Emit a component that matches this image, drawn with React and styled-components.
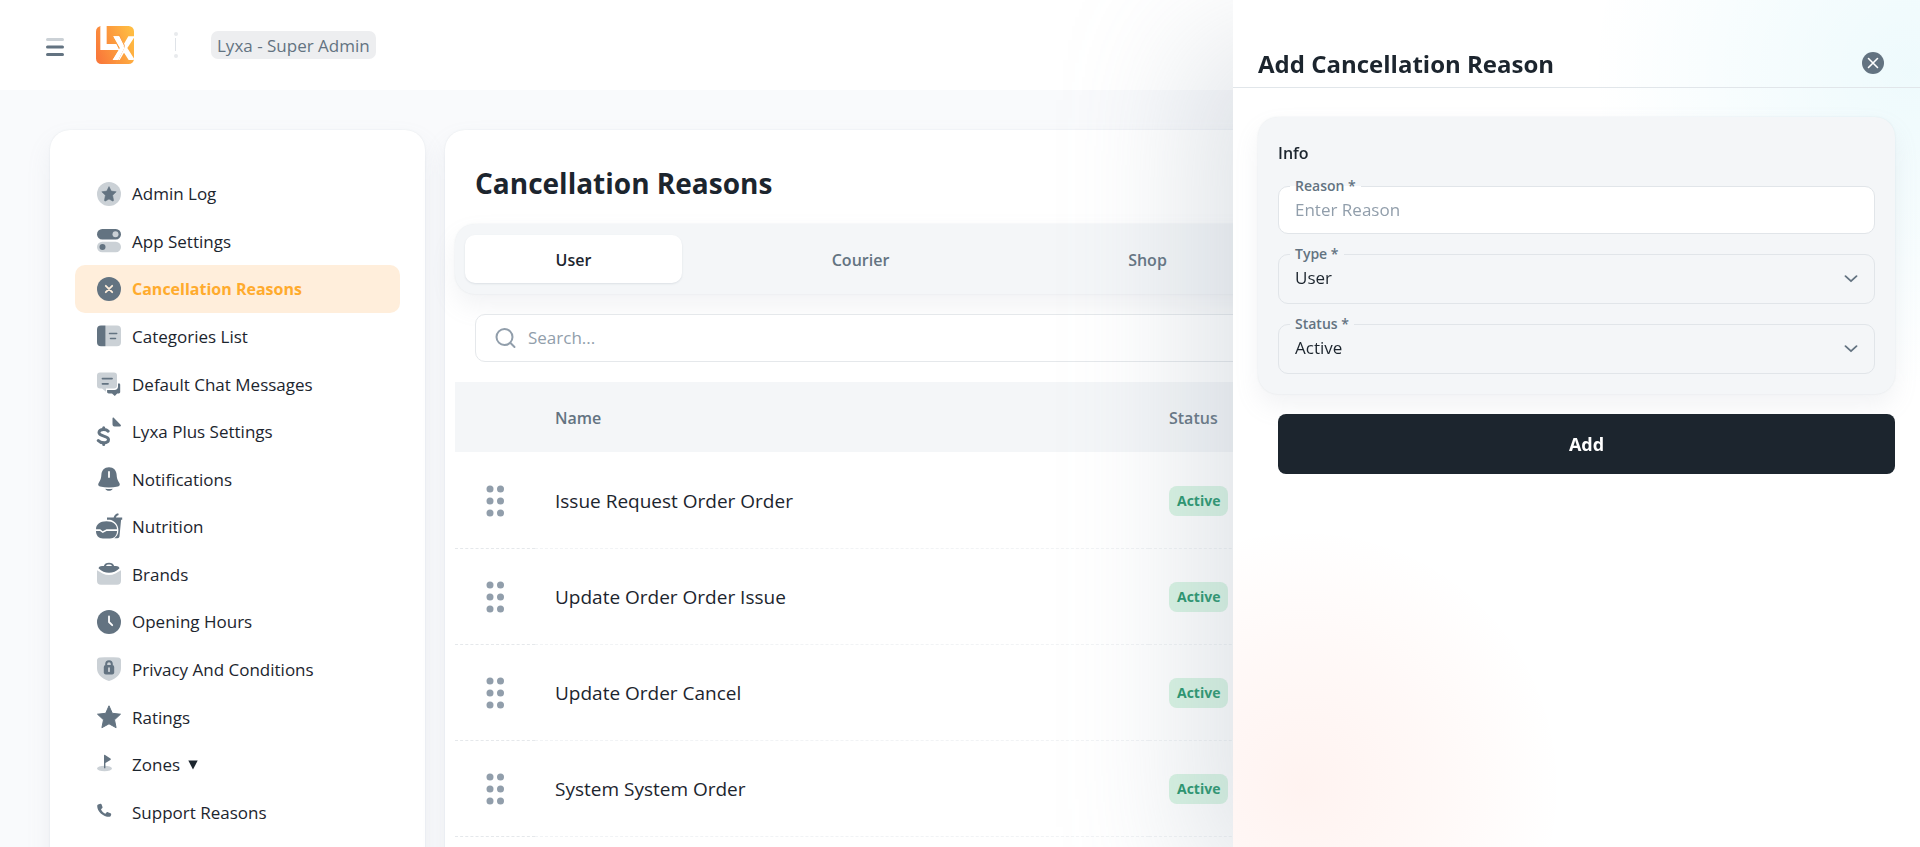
import React from "react";
import styled, { createGlobalStyle, css } from "styled-components";

const GlobalStyle = createGlobalStyle`
  *, *::before, *::after { box-sizing: border-box; }
  body {
    margin: 0;
    overflow: hidden;
    background: #f9fafc;
    color: #1c252e;
    font-family: "Open Sans", "Noto Sans", sans-serif;
    font-size: 17px;
    line-height: 24px;
  }
  button, input, select { font: inherit; color: inherit; }
`;

const softShadow = css`
  box-shadow: 0 0 2px rgba(145, 158, 171, 0.2), 0 12px 24px rgba(145, 158, 171, 0.12);
`;

/* ---------- header ---------- */

const Header = styled.header`
  display: flex;
  align-items: center;
  height: 90px;
  padding: 0 46px;
  background: #fff;
`;

const IconButton = styled.button`
  display: flex;
  padding: 0;
  border: 0;
  background: none;
  cursor: pointer;
`;

const MenuButton = styled(IconButton)`
  padding-top: 4px;
`;

const LogoLink = styled.a`
  display: flex;
  margin-left: 32px;
`;

const Divider = styled.svg`
  margin: 0 33px 0 40px;
`;

const RolePill = styled.span`
  padding: 3px 6px 1px;
  border-radius: 7px;
  background: #edeef0;
  color: #637381;
`;

/* ---------- page ---------- */

const Page = styled.div`
  display: grid;
  grid-template-columns: 375px minmax(0, 1fr);
  gap: 20px;
  padding: 40px 50px;
`;

const Sidebar = styled.nav`
  padding: 40px 25px;
  border-radius: 20px;
  background: #fff;
  ${softShadow}
`;

const NavList = styled.ul`
  display: grid;
  grid-auto-rows: 1fr;
  min-height: 666px;
  margin: 0;
  padding: 0;
  list-style: none;
`;

const NavItem = styled.li`
  display: flex;
`;

const NavLink = styled.a`
  display: flex;
  flex: 1;
  align-items: center;
  gap: 11px;
  padding: 0 22px;
  border-radius: 10px;
  background: ${(p) => (p.$active ? "#ffeedb" : "transparent")};
  color: ${(p) => (p.$active ? "#ffab2d" : "#1c252e")};
  font-size: ${(p) => (p.$active ? "16px" : "17px")};
  font-weight: ${(p) => (p.$active ? 700 : 500)};
  text-decoration: none;
`;

const NavText = styled.span`
  display: flex;
  align-items: center;
  gap: 8px;
  padding-top: 1px;
`;

const Content = styled.main`
  padding: 32px 10px 40px;
  border-radius: 20px;
  background: #fff;
  ${softShadow}
`;

const Title = styled.h1`
  margin: 0 20px 20px;
  font-size: 28px;
  font-weight: 700;
  line-height: 42px;
`;

const TabBar = styled.div`
  display: flex;
  gap: 70px;
  height: 70px;
  padding: 11px 10px;
  border-radius: 20px;
  background: #f4f6f8;
  ${softShadow}
`;

const Tab = styled.button`
  flex: 0 0 217px;
  padding: 2px 0 0;
  border: 0;
  border-radius: 10px;
  background: ${(p) => (p.$active ? "#fff" : "transparent")};
  box-shadow: ${(p) => (p.$active ? "0 1px 2px rgba(145, 158, 171, 0.24)" : "none")};
  color: ${(p) => (p.$active ? "#1c252e" : "#637381")};
  font-size: 16px;
  font-weight: 600;
  cursor: pointer;
`;

const SearchBox = styled.label`
  display: flex;
  align-items: center;
  gap: 10px;
  height: 48px;
  margin: 20px;
  padding: 0 18px;
  border: 1px solid #e5e8eb;
  border-radius: 10px;
  background: #fff;
`;

const SearchInput = styled.input`
  flex: 1;
  padding: 0;
  border: 0;
  outline: 0;
  background: none;
  font-size: 17px;
  &::placeholder { color: #919eab; opacity: 1; }
`;

const Table = styled.table`
  width: 100%;
  table-layout: fixed;
  border-spacing: 0;
`;

const HeadCell = styled.th`
  width: ${(p) => p.$width || "auto"};
  height: 71px;
  padding: 2px 20px 0;
  border-bottom: 1px solid transparent;
  background: #f4f6f8;
  background-clip: padding-box;
  color: #637381;
  font-size: 16px;
  font-weight: 600;
  text-align: left;
`;

const Cell = styled.td`
  height: 96px;
  padding: 0 20px;
  border-bottom: 1px dashed ${(p) => (p.$handle ? "#e5e8eb" : "#f1f3f5")};
  font-size: ${(p) => (p.$handle ? "16px" : "19px")};
  text-align: ${(p) => (p.$handle ? "center" : "left")};
`;

const Handle = styled(IconButton)`
  display: inline-flex;
  vertical-align: middle;
  cursor: grab;
`;

const Badge = styled.span`
  display: inline-block;
  padding: 0 8px;
  border-radius: 8px;
  background: #d8f4e3;
  color: #22946a;
  font-size: 14px;
  font-weight: 700;
  line-height: 30px;
  vertical-align: middle;
`;

/* ---------- drawer ---------- */

const Drawer = styled.aside`
  position: fixed;
  top: 0;
  right: 0;
  bottom: 0;
  width: 687px;
  max-width: 100%;
  background:
    radial-gradient(circle 320px at calc(100% - 10px) 70px, rgba(0, 184, 217, 0.065), rgba(0, 184, 217, 0.035) 50%, rgba(0, 184, 217, 0) 100%),
    radial-gradient(circle 260px at 70px calc(100% - 60px), rgba(255, 86, 48, 0.07), rgba(255, 86, 48, 0.04) 50%, rgba(255, 86, 48, 0) 100%),
    #fff;
  box-shadow: -40px 40px 120px rgba(145, 158, 171, 0.28);
`;

const DrawerHead = styled.div`
  display: flex;
  align-items: center;
  justify-content: space-between;
  height: 88px;
  padding: 38px 35px 0 25px;
  border-bottom: 1px solid #e1e6ea;
`;

const DrawerTitle = styled.h2`
  margin: 0;
  padding-top: 2px;
  font-size: 24px;
  font-weight: 700;
  line-height: 46px;
`;

const DrawerForm = styled.form`
  padding: 29px 25px;
`;

const FormCard = styled.div`
  display: flex;
  flex-direction: column;
  gap: 20px;
  padding: 20px;
  border-radius: 20px;
  background: #f4f6f8;
  ${softShadow}
`;

const FormHeading = styled.h3`
  margin: 0;
  padding: 4px 0 1px;
  font-size: 16px;
  font-weight: 600;
`;

const Field = styled.div`
  position: relative;
`;

const FieldLabel = styled.label`
  position: absolute;
  top: -10px;
  left: 12px;
  padding: 0 5px;
  background: linear-gradient(#f4f6f8 50%, ${(p) => p.$fill} 50%);
  color: #637381;
  font-size: 14px;
  font-weight: 600;
  line-height: 20px;
`;

const controlStyle = css`
  display: block;
  width: 100%;
  padding: 0 16px 2px;
  border: 1px solid #e1e5e9;
  border-radius: 10px;
  outline: 0;
  font-size: 17px;
`;

const TextInput = styled.input`
  ${controlStyle}
  height: 48px;
  background: #fff;
  &::placeholder { color: #919eab; opacity: 1; }
`;

const Select = styled.select`
  ${controlStyle}
  height: 50px;
  background: transparent;
  appearance: none;
`;

const SelectArrow = styled.svg`
  position: absolute;
  top: 50%;
  right: 17px;
  margin-top: -4px;
  pointer-events: none;
`;

const SubmitButton = styled.button`
  display: block;
  width: calc(100% - 20px);
  height: 60px;
  margin: 20px 0 0 20px;
  border: 0;
  border-radius: 8px;
  background: #1c252e;
  color: #fff;
  font-size: 18px;
  font-weight: 700;
  cursor: pointer;
`;

/* ---------- icons ---------- */

const DARK = "#637381";
const LIGHT = "#cbd1d6";

const icons = {
  adminLog: (
    <>
      <circle cx="12" cy="12" r="12" fill={LIGHT} />
      <path d="M12 4.6l2.2 4.5 5 .7-3.6 3.5.9 5c.1.6-.4.9-.9.7L12 17l-3.6 2c-.5.2-1-.1-.9-.7l.9-5-3.6-3.5 5-.7z" fill={DARK} stroke={DARK} strokeLinejoin="round" strokeWidth=".6" />
    </>
  ),
  settings: (
    <>
      <rect y="0" width="24" height="10.4" rx="5.2" fill={DARK} />
      <circle cx="18.5" cy="5.2" r="3" fill={LIGHT} />
      <rect y="12.8" width="24" height="10.4" rx="5.2" fill={LIGHT} />
      <circle cx="5.5" cy="18" r="3" fill={DARK} />
    </>
  ),
  cancel: (
    <>
      <circle cx="12" cy="12" r="12" fill={DARK} />
      <path d="M8.8 8.8l6.4 6.4M15.2 8.8l-6.4 6.4" stroke="#ffeedb" strokeWidth="1.8" strokeLinecap="round" />
    </>
  ),
  categories: (
    <>
      <path d="M9 1.6h11a4 4 0 014 4v12.6a4 4 0 01-4 4H9z" fill={LIGHT} />
      <path d="M8.6 1.6H4a4 4 0 00-4 4v12.6a4 4 0 004 4h4.600z" fill={DARK} />
      <path d="M12.500 9.600h7.200M13.500 14.500h5" stroke={DARK} strokeWidth="1.500" strokeLinecap="round" />
    </>
  ),
  chat: (
    <>
      <path d="M3 .5h14a3 3 0 013 3v10a3 3 0 01-3 3H9v3.200L5 16.500H3a3 3 0 01-3-3v-10a3 3 0 013-3z" fill={LIGHT} />
      <path d="M5.500 6.600h9.500M5.500 11.800h5.500" stroke={DARK} strokeWidth="1.800" strokeLinecap="round" />
      <path d="M21 11.500h1c.8 0 1.200.5 1.200 1.200v7.300c0 .9-.6 1.400-1.400 1.400h-1.600l-2.400 2.600-2.800-2.600h-3.300c-1 0-1.600-.6-1.600-1.400V18h7.400c2.200 0 3.500-1.200 3.500-3.200z" fill={DARK} />
    </>
  ),
  plus: (
    <>
      <path d="M15.500-1.500c0-1 .8-1.300 1.500-.5l6.600 6.700c.7.800.3 1.700-.6 1.700h-5.500a2 2 0 01-2-2z" fill={DARK} />
      <path d="M11.200 11.200C10.200 10 8.700 9.400 6.600 9.400 4 9.400 2 10.600 2 12.600c0 4.300 9.500 2.800 9.500 6.900 0 2.100-2 3.300-4.900 3.300-2.300 0-4.200-.8-5.400-2.200" fill="none" stroke={DARK} strokeWidth="3" strokeLinecap="round" />
      <path d="M6.700 7.800v1.500M6.700 23v1.600" stroke={DARK} strokeWidth="3" strokeLinecap="round" />
    </>
  ),
  bell: (
    <>
      <path d="M12 .2c4.600 0 7.400 3.200 7.600 7.300.2 3.600.8 5.700 2.600 8.200 1.200 1.700.6 3.300-1.300 3.800-5.600 1.200-12.200 1.200-17.800 0-1.900-.5-2.500-2.100-1.300-3.800 1.800-2.500 2.400-4.600 2.600-8.200C4.600 3.400 7.400.2 12 .2z" fill={DARK} />
      <path d="M12 5v5" stroke="#fff" strokeWidth="1.800" strokeLinecap="round" />
      <path d="M8.300 21.800c2.500.4 4.900.4 7.400 0-.7 1.400-2 2-3.700 2s-3-.6-3.700-2z" fill={DARK} />
    </>
  ),
  nutrition: (
    <>
      <path d="M10 2.600h6.600c.7-2.400 2-3.700 4.600-4.300l.5 1.700c-1.600.4-2.400 1.200-2.900 2.600h6.400v2.200h-1.100l-1.600 16.500c-.1 1.200-.9 2-2.100 2h-3.200c2.700-1.800 4.200-4.400 4.200-8.100 0-5.200-3.300-9.200-8.400-10.400H10z" fill={DARK} />
      <path d="M-1 14.300c0-4.700 3.800-8 10.500-8s10.500 3.300 10.500 8H9.500l-3.800 2-2.500-2z" fill={DARK} />
      <path d="M-1 16h4l2.700 2 3.800-2H20c0 4.600-2.600 7.400-7 7.400H6c-4.400 0-7-2.800-7-7.400z" fill={DARK} />
    </>
  ),
  brands: (
    <>
      <path d="M0 8.200l5.600 3.400c4.300 2 8.500 2 12.800 0L24 8.200v10.600a4 4 0 01-4 4H4a4 4 0 01-4-4z" fill={LIGHT} />
      <path d="M1.500 6.200c.5-1.400 1.700-2.100 3.500-2.100h1.800C7.800 1.700 9 .8 12 .8s4.200.9 5.200 3.300H19c1.800 0 3 .7 3.500 2.100-6 6-15 6-21 0zM9 4.100h6c-.6-1.200-1.400-1.600-3-1.600s-2.400.4-3 1.600z" fill={DARK} fillRule="evenodd" />
    </>
  ),
  clock: (
    <>
      <circle cx="12" cy="12" r="12" fill={DARK} />
      <path d="M12 6.500v5.500l3.200 3.200" fill="none" stroke="#fff" strokeWidth="1.800" strokeLinecap="round" strokeLinejoin="round" />
    </>
  ),
  shield: (
    <>
      <path d="M3 .6C9 0 15 0 21 .6c2 .2 3 1.200 3 3V11c0 6-4 10.500-12 13C4 21.500 0 17 0 11V3.600c0-1.800 1-2.800 3-3z" fill={LIGHT} />
      <path d="M9.200 8.500V7a2.800 2.800 0 015.600 0v1.500" fill="none" stroke={DARK} strokeWidth="2" />
      <rect x="6.800" y="8" width="10.400" height="9.400" rx="2" fill={DARK} />
      <path d="M12 11.200v3" stroke={LIGHT} strokeWidth="1.800" strokeLinecap="round" />
    </>
  ),
  star: (
    <path d="M12 .8l3.300 7.500 8.200.9-6 5.600 1.600 7.900L12 18.800l-7.100 3.900 1.600-7.900-6-5.600 8.200-.9z" fill={DARK} stroke={DARK} strokeWidth="1" strokeLinejoin="round" />
  ),
  flag: (
    <>
      <ellipse cx="7.500" cy="15.500" rx="7.500" ry="2.800" fill={LIGHT} />
      <path d="M7 2.500c0-.6.600-.8 1.100-.5l5.300 3.600c.6.400.6.900 0 1.300L8.400 10v5.300H7z" fill={DARK} />
    </>
  ),
  phone: (
    <path d="M3.300 3.800c.5-.2 1 0 1.200.5l1 2.600c.2.600 0 1-.4 1.400L4 9.200c.8 2 2.400 3.600 4.400 4.500l1.100-1.200c.4-.4.9-.5 1.400-.3l2.600 1c.6.300.8.800.7 1.300l-.4 1.300c-.2.600-.6 1-1.300 1C5.800 16.800.2 11.200.2 5.900c0-.7.3-1.200.9-1.400z" fill={DARK} />
  ),
};

const navItems = [
  ["Admin Log", "adminLog"],
  ["App Settings", "settings"],
  ["Cancellation Reasons", "cancel"],
  ["Categories List", "categories"],
  ["Default Chat Messages", "chat"],
  ["Lyxa Plus Settings", "plus"],
  ["Notifications", "bell"],
  ["Nutrition", "nutrition"],
  ["Brands", "brands"],
  ["Opening Hours", "clock"],
  ["Privacy And Conditions", "shield"],
  ["Ratings", "star"],
  ["Zones", "flag"],
  ["Support Reasons", "phone"],
];

const reasons = [
  "Issue Request Order Order",
  "Update Order Order Issue",
  "Update Order Cancel",
  "System System Order",
];

function MenuIcon() {
  return (
    <svg width="18" height="20" viewBox="0 0 18 20" aria-hidden="true">
      <rect y="1" width="18" height="3" rx="1.500" fill={LIGHT} />
      <rect y="8.500" width="18" height="3" rx="1.500" fill={DARK} />
      <rect y="16" width="18" height="3" rx="1.500" fill={DARK} />
    </svg>
  );
}

function Logo() {
  return (
    <svg width="38" height="38" viewBox="0 0 114 114" aria-hidden="true">
      <defs>
        <linearGradient id="logoFill" x1="0" y1="0.700" x2="1" y2="0.300">
          <stop offset="0" stopColor="#f9793a" />
          <stop offset="1" stopColor="#ffbc42" />
        </linearGradient>
        <clipPath id="logoClip">
          <rect width="114" height="114" rx="16" />
        </clipPath>
      </defs>
      <g clipPath="url(#logoClip)">
        <rect width="114" height="114" fill="url(#logoFill)" />
        <path d="M13 0h19v54h29l9 18H13z" fill="#fff" />
        <path d="M52 31h19l13 22 13-22h20L94 66l23 36H98L84 80 71 102H50l22-36z" fill="#fff" />
        <path d="M68 24l17 34-2 9M83 67L60 114" fill="none" stroke="#fb9a3e" strokeWidth="3" />
        <path d="M50 102l22-36-20-35h17l16 35-18 36z" fill="#fff" />
      </g>
    </svg>
  );
}

function DragIcon() {
  return (
    <svg width="18" height="32" viewBox="0 0 18 32" fill="#919eab" aria-hidden="true">
      {[4, 16, 28].map((y) => (
        <React.Fragment key={y}>
          <circle cx="4" cy={y} r="3.500" />
          <circle cx="14.500" cy={y} r="3.500" />
        </React.Fragment>
      ))}
    </svg>
  );
}

function SelectField({ id, label, value }) {
  return (
    <Field>
      <Select id={id} defaultValue={value}>
        <option>{value}</option>
      </Select>
      <FieldLabel htmlFor={id} $fill="#f4f6f8">{label}</FieldLabel>
      <SelectArrow width="14" height="8" viewBox="0 0 14 8" aria-hidden="true">
        <path d="M1.500 1.200L7 6.200l5.500-5" fill="none" stroke={DARK} strokeWidth="1.800" strokeLinecap="round" strokeLinejoin="round" />
      </SelectArrow>
    </Field>
  );
}

export default function App() {
  return (
    <>
      <GlobalStyle />
      <Header>
        <MenuButton type="button" aria-label="Toggle menu"><MenuIcon /></MenuButton>
        <LogoLink href="#home" aria-label="Home"><Logo /></LogoLink>
        <Divider width="4" height="26" viewBox="0 0 4 26" aria-hidden="true">
          <circle cx="2" cy="2" r="2" fill="#e8eaed" />
          <rect x="1" y="6" width="1" height="13" fill="#dfe3e8" />
          <circle cx="2" cy="24" r="2" fill="#e8eaed" />
        </Divider>
        <RolePill>Lyxa - Super Admin</RolePill>
      </Header>

      <Page>
        <Sidebar aria-label="Settings">
          <NavList>
            {navItems.map(([label, icon]) => {
              const active = label === "Cancellation Reasons";
              return (
                <NavItem key={label}>
                  <NavLink href={"#" + icon} $active={active} aria-current={active ? "page" : undefined}>
                    <svg width="24" height="24" viewBox="0 0 24 24" overflow="visible" aria-hidden="true">
                      {icons[icon]}
                    </svg>
                    <NavText>
                      {label}
                      {label === "Zones" && (
                        <svg width="10" height="10" viewBox="0 0 10 10" aria-hidden="true">
                          <path d="M.3.500h9.400L5 9.500z" fill="#1c252e" />
                        </svg>
                      )}
                    </NavText>
                  </NavLink>
                </NavItem>
              );
            })}
          </NavList>
        </Sidebar>

        <Content>
          <Title>Cancellation Reasons</Title>
          <TabBar role="tablist">
            {["User", "Courier", "Shop"].map((tab, i) => (
              <Tab key={tab} type="button" role="tab" aria-selected={i === 0} $active={i === 0}>{tab}</Tab>
            ))}
          </TabBar>
          <SearchBox>
            <svg width="24" height="24" viewBox="0 0 24 24" fill="none" stroke="#919eab" strokeWidth="2" strokeLinecap="round" aria-hidden="true">
              <circle cx="10.500" cy="11" r="8" />
              <path d="M16.500 17l4 4" />
            </svg>
            <SearchInput type="search" placeholder="Search..." aria-label="Search" />
          </SearchBox>
          <Table>
            <thead>
              <tr>
                <HeadCell $width="80px" aria-label="Reorder" />
                <HeadCell $width="43.7%">Name</HeadCell>
                <HeadCell>Status</HeadCell>
              </tr>
            </thead>
            <tbody>
              {reasons.map((reason) => (
                <tr key={reason}>
                  <Cell $handle>
                    <Handle type="button" aria-label={"Move " + reason}><DragIcon /></Handle>
                  </Cell>
                  <Cell>{reason}</Cell>
                  <Cell><Badge>Active</Badge></Cell>
                </tr>
              ))}
            </tbody>
          </Table>
        </Content>
      </Page>

      <Drawer role="dialog" aria-labelledby="drawer-title">
        <DrawerHead>
          <DrawerTitle id="drawer-title">Add Cancellation Reason</DrawerTitle>
          <IconButton type="button" aria-label="Close">
            <svg width="24" height="24" viewBox="0 0 24 24" aria-hidden="true">
              <circle cx="12" cy="12" r="11" fill={DARK} />
              <path d="M7.500 7.500l9 9M16.500 7.500l-9 9" stroke="#fff" strokeWidth="1.600" strokeLinecap="round" />
            </svg>
          </IconButton>
        </DrawerHead>
        <DrawerForm onSubmit={(e) => e.preventDefault()}>
          <FormCard>
            <FormHeading>Info</FormHeading>
            <Field>
              <TextInput id="reason" type="text" placeholder="Enter Reason" />
              <FieldLabel htmlFor="reason" $fill="#fff">Reason *</FieldLabel>
            </Field>
            <SelectField id="type" label="Type *" value="User" />
            <SelectField id="status" label="Status *" value="Active" />
          </FormCard>
          <SubmitButton type="submit">Add</SubmitButton>
        </DrawerForm>
      </Drawer>
    </>
  );
}
